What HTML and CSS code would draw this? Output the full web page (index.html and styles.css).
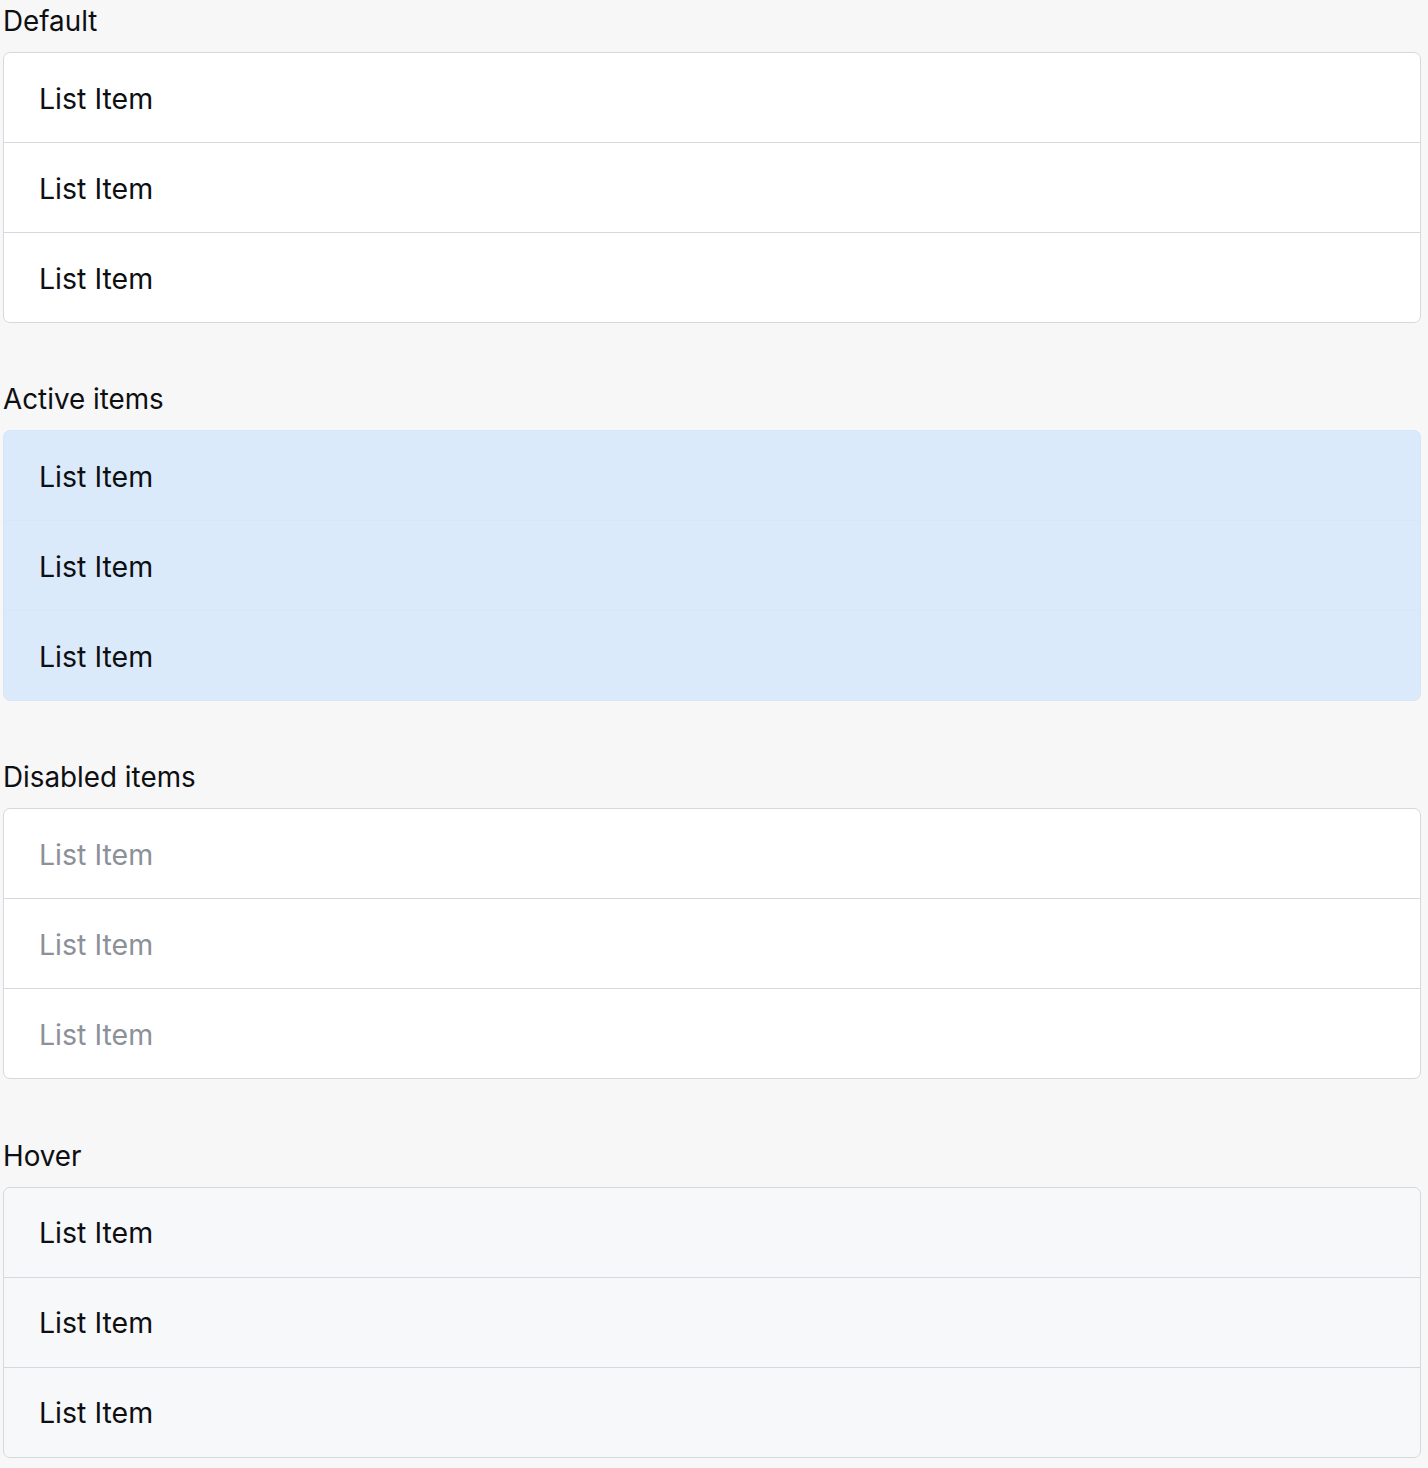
FILE: index.html
```html
<!DOCTYPE html>
<html>
<head>
<meta charset="utf-8">
<link rel="stylesheet" href="styles.css">
</head>
<body>
<div class="page">
  <section class="group">
    <h2 class="title">Default</h2>
    <ul class="list">
      <li class="item">List Item</li>
      <li class="item">List Item</li>
      <li class="item">List Item</li>
    </ul>
  </section>
  <section class="group">
    <h2 class="title">Active items</h2>
    <ul class="list list-active">
      <li class="item">List Item</li>
      <li class="item">List Item</li>
      <li class="item">List Item</li>
    </ul>
  </section>
  <section class="group">
    <h2 class="title">Disabled items</h2>
    <ul class="list list-disabled">
      <li class="item">List Item</li>
      <li class="item">List Item</li>
      <li class="item">List Item</li>
    </ul>
  </section>
  <section class="group">
    <h2 class="title">Hover</h2>
    <ul class="list list-hover">
      <li class="item">List Item</li>
      <li class="item">List Item</li>
      <li class="item">List Item</li>
    </ul>
  </section>
</div>
</body>
</html>
```
FILE: styles.css
```css
html, body {
  margin: 0;
  padding: 0;
  background: #f7f7f7;
}
body {
  font-family: Inter, "Liberation Sans", sans-serif;
  color: #0e0f12;
}
.page {
  display: flex;
  flex-direction: column;
  gap: 55.2px;
  padding: 0 7px 0 3px;
}
.group {
  display: flex;
  flex-direction: column;
}
.title {
  margin: 0;
  height: 52px;
  font-size: 27.8px;
  font-weight: 400;
  line-height: 43px;
  letter-spacing: 0;
}
.list {
  list-style: none;
  margin: 0;
  padding: 0;
  border: 1px solid #d5d8dd;
  border-radius: 7px;
  background: #ffffff;
  overflow: hidden;
}
.item {
  height: 88px;
  display: flex;
  align-items: center;
  padding: 1px 0 0 35px;
  font-size: 28.5px;
  letter-spacing: 0;
  border-top: 1px solid #d5d8dd;
}
.item:first-child {
  border-top: none;
}
.list-active {
  background: #dbeafa;
  border-color: #d5e6f8;
}
.list-active .item {
  border-top-color: #d6e7f9;
}
.list-disabled .item {
  color: #8b9099;
}
.list-hover {
  background: #f7f8fa;
}
```
